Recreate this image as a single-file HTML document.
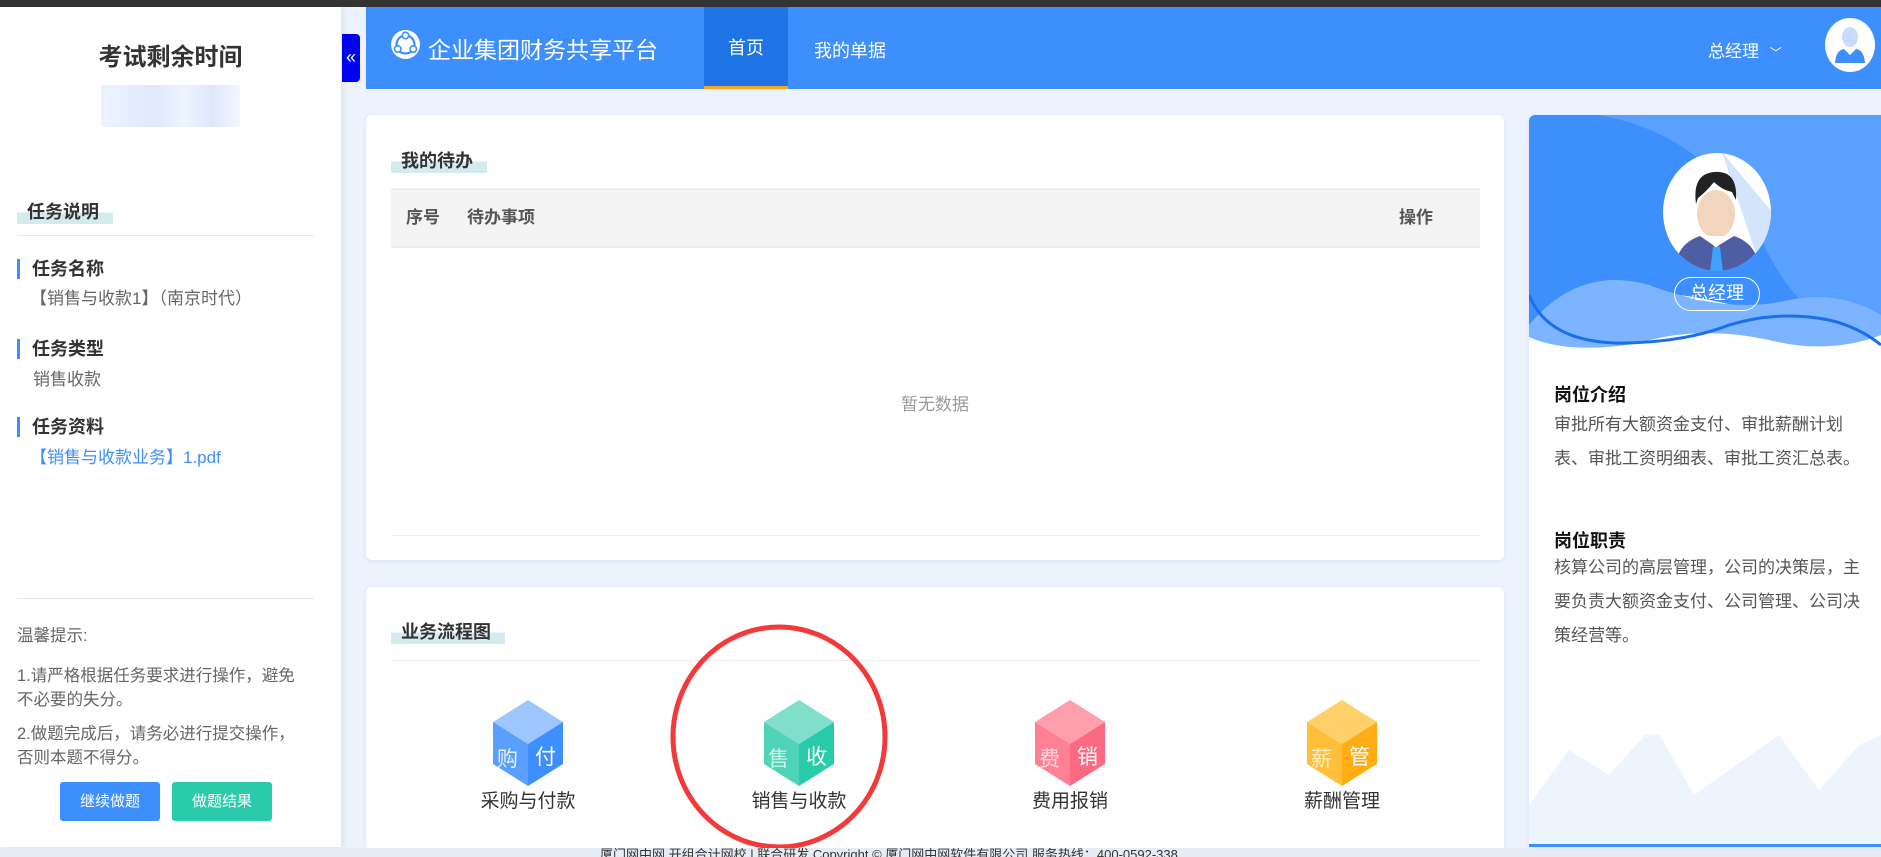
<!DOCTYPE html>
<html><head><meta charset="utf-8">
<style>
*{margin:0;padding:0;box-sizing:border-box}
body{width:1881px;height:857px;overflow:hidden;background:#edf3fc;font-family:"Liberation Sans","Noto Sans CJK SC",sans-serif;position:relative;color:#333}
.abs{position:absolute}
.topbar{left:0;top:0;width:1881px;height:7px;background:#333}
.left{left:0;top:7px;width:341px;height:840px;background:#fff;box-shadow:2px 0 6px rgba(0,0,0,.08)}
.hl{display:inline-block;font-weight:bold;font-size:18px;color:#333;padding:0 14px 0 10px;background:linear-gradient(to bottom,transparent 55%,#d4ebee 55%)}
.item{left:17px;border-left:3px solid #3d8ffe;padding-left:12px;font-weight:bold;font-size:18px;line-height:20px;color:#333}
.val{font-size:17px;color:#666}
.tip{left:17px;font-size:16.5px;color:#666;line-height:24px;white-space:nowrap}
.btn{top:782px;width:100px;height:39px;color:#fff;font-size:15px;text-align:center;line-height:39px;border-radius:3px}
.header{left:366px;top:7px;width:1515px;height:82px;background:#3d8ffe}
.card{background:#fff;border-radius:6px;box-shadow:0 1px 4px rgba(61,143,254,.15)}
.cube{width:70px;height:86px}
.lbl{font-size:19px;color:#333;width:200px;text-align:center}
.rtxt{left:1554px;font-size:17px;color:#555;line-height:34px;white-space:nowrap}
</style></head><body>
<div class="abs topbar"></div>
<div class="abs left">
  <div class="abs" style="left:0;top:30px;width:341px;text-align:center;font-size:24px;font-weight:bold;color:#333">考试剩余时间</div>
  <div class="abs" style="left:101px;top:78px;width:139px;height:42px;background:linear-gradient(90deg,#eef3ff,#dfe9fb 40%,#eef4ff 60%,#dde8fb 80%,#f3f7ff)"></div>
  <div class="abs" style="left:17px;top:191px"><span class="hl">任务说明</span></div>
  <div class="abs" style="left:17px;top:228px;width:297px;height:1px;background:#e8e8e8"></div>
  <div class="abs item" style="top:252px">任务名称</div>
  <div class="abs val" style="left:30px;top:277px">【销售与收款1】（南京时代）</div>
  <div class="abs item" style="top:332px">任务类型</div>
  <div class="abs val" style="left:33px;top:358px">销售收款</div>
  <div class="abs item" style="top:410px">任务资料</div>
  <div class="abs val" style="left:30px;top:436px;color:#3d8ffe">【销售与收款业务】1.pdf</div>
  <div class="abs" style="left:17px;top:591px;width:297px;height:1px;background:#e8e8e8"></div>
  <div class="abs tip" style="top:617px">温馨提示:</div>
  <div class="abs tip" style="top:657px">1.请严格根据任务要求进行操作，避免<br>不必要的失分。</div>
  <div class="abs tip" style="top:715px">2.做题完成后，请务必进行提交操作，<br>否则本题不得分。</div>
  <div class="abs btn" style="left:60px;top:775px;background:#3d8ffe">继续做题</div>
  <div class="abs btn" style="left:172px;top:775px;background:#2acbaa">做题结果</div>
</div>
<div class="abs" style="left:342px;top:34px;width:18px;height:48px;background:#0000f0;border-radius:0 4px 4px 0;color:#fff;font-size:18px;line-height:46px;text-align:center">«</div>
<div class="abs header">
  <svg class="abs" style="left:24px;top:22px" width="31" height="31" viewBox="0 0 31 31"><circle cx="15.5" cy="15.5" r="14.5" fill="#fff"/><circle cx="15.5" cy="15.5" r="9" fill="none" stroke="#3d8ffe" stroke-width="2.2"/><circle cx="15.5" cy="6.5" r="3.2" fill="#fff" stroke="#3d8ffe" stroke-width="1.6"/><circle cx="7.7" cy="20" r="3.2" fill="#fff" stroke="#3d8ffe" stroke-width="1.6"/><circle cx="23.3" cy="20" r="3.2" fill="#fff" stroke="#3d8ffe" stroke-width="1.6"/></svg>
  <div class="abs" style="left:62px;top:24px;font-size:23px;color:#fff">企业集团财务共享平台</div>
  <div class="abs" style="left:338px;top:0;width:84px;height:82px;background:#1f74e5;border-bottom:3px solid #f5a623;color:#fff;font-size:18px;text-align:center;line-height:82px">首页</div>
  <div class="abs" style="left:448px;top:30px;font-size:18px;color:#fff">我的单据</div>
  <div class="abs" style="left:1342px;top:30px;font-size:17px;color:#fff">总经理 <span style="font-size:12px;margin-left:6px">﹀</span></div>
  <svg class="abs" style="left:1458px;top:10px" width="52" height="56" viewBox="0 0 52 56"><ellipse cx="26" cy="28" rx="25" ry="27" fill="#fff"/><ellipse cx="26" cy="20" rx="8" ry="10" fill="#c9dcfb"/><path d="M11 46 Q12 33 20 32 L26 38 L32 32 Q40 33 41 46 Z" fill="#3d8ffe"/></svg>
</div>
<div class="abs card" style="left:366px;top:115px;width:1138px;height:445px">
  <div class="abs" style="left:25px;top:32px"><span class="hl">我的待办</span></div>
  <div class="abs" style="left:25px;top:73px;width:1089px;height:60px;background:#f4f4f4;border-top:2px solid #ececec;border-bottom:2px solid #ececec;font-weight:bold;font-size:17px;color:#555;line-height:56px">
    <span class="abs" style="left:15px">序号</span><span class="abs" style="left:76px">待办事项</span><span class="abs" style="left:1008px">操作</span>
  </div>
  <div class="abs" style="left:0;top:275px;width:1138px;text-align:center;font-size:17px;color:#999">暂无数据</div>
  <div class="abs" style="left:25px;top:420px;width:1089px;height:1px;background:#e8eef8"></div>
</div>
<div class="abs card" style="left:366px;top:587px;width:1138px;height:265px">
  <div class="abs" style="left:25px;top:31px"><span class="hl">业务流程图</span></div>
  <div class="abs" style="left:25px;top:73px;width:1089px;height:1px;background:#ececec"></div>
</div>
<!-- cubes -->
<svg class="abs cube" style="left:493px;top:700px" viewBox="0 0 70 86"><path d="M35 0L70 22L35 44L0 22Z" fill="#9dc5fe"/><path d="M0 22L35 44V86L0 64Z" fill="#5a9ffd"/><path d="M70 22L35 44V86L70 64Z" fill="#3d8ffe"/><text x="4" y="66" font-size="21" fill="#fff" opacity=".85">购</text><text x="42" y="64" font-size="21" fill="#fff">付</text></svg>
<svg class="abs cube" style="left:764px;top:700px" viewBox="0 0 70 86"><path d="M35 0L70 22L35 44L0 22Z" fill="#7fdfcb"/><path d="M0 22L35 44V86L0 64Z" fill="#4fd4b8"/><path d="M70 22L35 44V86L70 64Z" fill="#2acbaa"/><text x="4" y="66" font-size="21" fill="#fff" opacity=".7">售</text><text x="42" y="64" font-size="21" fill="#fff">收</text></svg>
<svg class="abs cube" style="left:1035px;top:700px" viewBox="0 0 70 86"><path d="M35 0L70 22L35 44L0 22Z" fill="#ff9fae"/><path d="M0 22L35 44V86L0 64Z" fill="#ff7f93"/><path d="M70 22L35 44V86L70 64Z" fill="#fb6a80"/><text x="4" y="66" font-size="21" fill="#fff" opacity=".7">费</text><text x="42" y="64" font-size="21" fill="#fff">销</text></svg>
<svg class="abs cube" style="left:1307px;top:700px" viewBox="0 0 70 86"><path d="M35 0L70 22L35 44L0 22Z" fill="#ffd06a"/><path d="M0 22L35 44V86L0 64Z" fill="#ffbf3a"/><path d="M70 22L35 44V86L70 64Z" fill="#ffad12"/><text x="4" y="66" font-size="21" fill="#fff" opacity=".7">薪</text><text x="42" y="64" font-size="21" fill="#fff">管</text></svg>
<div class="abs lbl" style="left:428px;top:786px">采购与付款</div>
<div class="abs lbl" style="left:699px;top:786px">销售与收款</div>
<div class="abs lbl" style="left:970px;top:786px">费用报销</div>
<div class="abs lbl" style="left:1242px;top:786px">薪酬管理</div>
<svg class="abs" style="left:668px;top:622px" width="224" height="230" viewBox="0 0 224 230"><ellipse cx="111" cy="115" rx="106" ry="110" fill="none" stroke="#f23a3a" stroke-width="5"/></svg>
<!-- right card -->
<div class="abs card" style="left:1529px;top:115px;width:352px;height:732px;overflow:hidden;border-radius:6px 0 0 0;border-bottom:3px solid #3d8ffe">
  <svg class="abs" style="left:0;top:0" width="352" height="260" viewBox="0 0 352 260">
    <rect width="352" height="260" fill="#fff"/>
    <path d="M0 0H352V200Q300 220 240 200Q140 170 80 180Q30 190 0 210Z" fill="#3d8ffe"/>
    <path d="M70 0Q180 20 230 120Q280 230 352 210V0Z" fill="#5aa1ff"/>
    <path d="M0 210Q50 150 120 170Q200 200 260 185Q310 175 352 200V220Q300 240 240 225Q170 210 110 228Q40 240 0 222Z" fill="#7db4ff"/>
    <path d="M0 180Q20 230 100 228Q160 226 200 210Q250 195 300 205Q330 212 352 230" fill="none" stroke="#1a6fea" stroke-width="3"/>
  </svg>
  <svg class="abs" style="left:133px;top:37px" width="110" height="120" viewBox="0 0 110 120"><defs><clipPath id="c"><ellipse cx="55" cy="60" rx="54" ry="59"/></clipPath></defs><ellipse cx="55" cy="60" rx="54" ry="59" fill="#fff"/><g clip-path="url(#c)"><path d="M60 0L110 60V120H100Z" fill="#d4e5fb"/><ellipse cx="54" cy="62" rx="19" ry="24" fill="#f3d4bc"/><path d="M34 52Q30 22 52 20Q76 18 74 48L70 40Q60 38 52 30Q44 40 36 46Z" fill="#222"/><path d="M12 120Q14 92 38 84L54 95L72 84Q96 92 98 120Z" fill="#4f5da3"/><path d="M42 84L54 96L66 84Z" fill="#fff"/><path d="M51 95H58L61 120H48Z" fill="#3da3ff"/></g></svg>
  <div class="abs" style="left:145px;top:162px;width:86px;height:34px;border:1.5px solid #fff;border-radius:17px;color:#fff;font-size:18px;text-align:center;line-height:31px">总经理</div>
  <svg class="abs" style="left:0;top:620px" width="352" height="112" viewBox="0 0 352 112"><path d="M0 70L40 15L80 40L125 -10L165 60L250 0L290 55L330 10L352 0V112H0Z" fill="#eef4fe"/></svg>
</div>
<div class="abs" style="left:1554px;top:381px;font-size:18px;font-weight:bold;color:#111">岗位介绍</div>
<div class="abs rtxt" style="top:408px">审批所有大额资金支付、审批薪酬计划<br>表、审批工资明细表、审批工资汇总表。</div>
<div class="abs" style="left:1554px;top:527px;font-size:18px;font-weight:bold;color:#111">岗位职责</div>
<div class="abs rtxt" style="top:551px">核算公司的高层管理，公司的决策层，主<br>要负责大额资金支付、公司管理、公司决<br>策经营等。</div>
<div class="abs" style="left:0;top:848px;width:1881px;height:9px;background:#e6ecf4;overflow:hidden"><div style="position:absolute;left:600px;top:-4px;font-size:13px;color:#333;white-space:nowrap">厦门网中网 开组合计网校 | 联合研发 Copyright © 厦门网中网软件有限公司 服务热线：400-0592-338</div></div>
</body></html>
